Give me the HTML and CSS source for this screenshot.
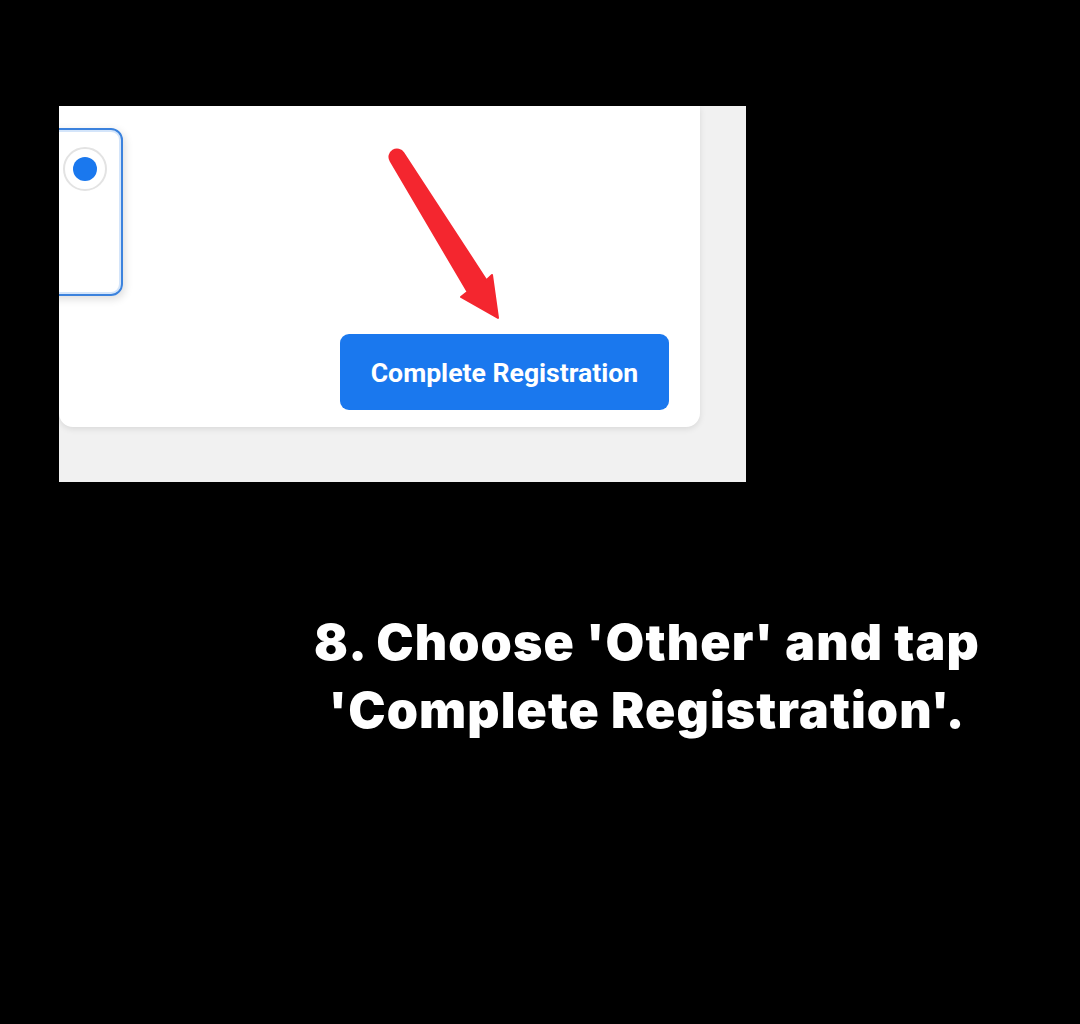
FILE: index.html
```html
<!DOCTYPE html>
<html>
<head>
<meta charset="utf-8">
<link rel="stylesheet" href="styles.css">
</head>
<body>
<div class="page">
  <div class="shot">
    <div class="card">
      <div class="option">
        <span class="radio"><span class="dot"></span></span>
      </div>
      <button class="btn">Complete Registration</button>
    </div>
    <svg class="arrow" width="687" height="376" viewBox="59 106 687 376">
      <path d="M403.4,153 L486.4,280.2 L492,275 L498,318 L461,297 L467.6,291.8 L390.6,161 A7.5,7.5 0 0 1 403.4,153 Z" fill="#f4262f" stroke="#f4262f" stroke-width="2" stroke-linejoin="round"/>
    </svg>
  </div>
  <p class="caption">8. Choose 'Other' and tap<br>'Complete Registration'.</p>
</div>
</body>
</html>
```
FILE: styles.css
```css
html, body {
  margin: 0;
  padding: 0;
  background: #000;
}
.page {
  width: 1080px;
  height: 1024px;
  padding: 106px 0 0 59px;
  box-sizing: border-box;
  overflow: hidden;
}
.shot {
  position: relative;
  width: 687px;
  height: 376px;
  background: #f1f1f1;
  overflow: hidden;
}
.card {
  width: 641px;
  height: 321px;
  box-sizing: border-box;
  background: #fff;
  border-radius: 0 0 14px 14px;
  box-shadow: 0 2px 6px rgba(0,0,0,0.10);
  display: flex;
  flex-direction: column;
  padding: 22px 0 17px 0;
}
.option {
  margin-left: -100px;
  width: 164px;
  height: 168px;
  box-sizing: border-box;
  border: 2px solid #3b82dd;
  border-radius: 12px;
  box-shadow: inset 0 0 0 2px #d4e5fa, 2px 3px 8px rgba(0,0,0,0.14);
  display: flex;
  justify-content: flex-end;
  align-items: flex-start;
  padding: 17px 14px 0 0;
}
.radio {
  width: 44px;
  height: 44px;
  box-sizing: border-box;
  border: 2px solid #e3e3e3;
  border-radius: 50%;
  display: flex;
  align-items: center;
  justify-content: center;
}
.dot {
  width: 24px;
  height: 24px;
  border-radius: 50%;
  background: #1a78ee;
}
.btn {
  margin-top: 38px;
  align-self: flex-end;
  margin-right: 31px;
  width: 329px;
  height: 76px;
  border: none;
  border-radius: 9px;
  background: #1a78ee;
  color: #fff;
  font-family: Roboto, "Liberation Sans", sans-serif;
  font-weight: 700;
  font-size: 26.6px;
  padding: 0;
}
.arrow {
  position: absolute;
  left: 0;
  top: 0;
}
.caption {
  margin: 126px 0 0 155px;
  width: 866px;
  text-align: center;
  color: #fff;
  font-family: Inter, "Open Sans", sans-serif;
  font-weight: 900;
  font-size: 50px;
  line-height: 68px;
  letter-spacing: 1.1px;
}
```
